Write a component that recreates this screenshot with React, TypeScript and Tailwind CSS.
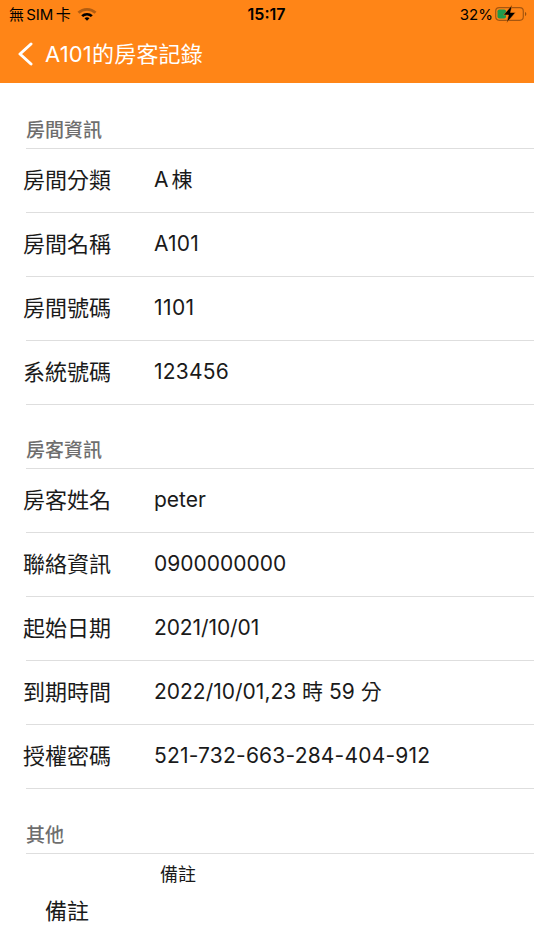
const FONT = "font-['Inter','Noto_Sans_CJK_TC',sans-serif]";

type Row = { label: string; value: string; valueClass?: string };

const sections: { title: string; rows: Row[] }[] = [
  {
    title: "房間資訊",
    rows: [
      { label: "房間分類", value: "A 棟", valueClass: "[word-spacing:-3px]" },
      { label: "房間名稱", value: "A101", valueClass: "tracking-[0.2px]" },
      { label: "房間號碼", value: "1101", valueClass: "tracking-[0.4px]" },
      { label: "系統號碼", value: "123456", valueClass: "tracking-[0.2px]" },
    ],
  },
  {
    title: "房客資訊",
    rows: [
      { label: "房客姓名", value: "peter" },
      { label: "聯絡資訊", value: "0900000000" },
      { label: "起始日期", value: "2021/10/01", valueClass: "-tracking-[0.1px]" },
      { label: "到期時間", value: "2022/10/01,23 時 59 分" },
      { label: "授權密碼", value: "521-732-663-284-404-912", valueClass: "tracking-[0.2px]" },
    ],
  },
];

function Wifi() {
  return (
    <svg width="20" height="14" viewBox="0 0 20 14" aria-hidden="true">
      <path d="M0.500 4.800a13.500 13.500 0 0 1 19 0l-2 2a10.700 10.700 0 0 0-15 0z" fill="#000" fillOpacity="0.3" />
      <path d="M4.200 8.300a8.400 8.400 0 0 1 11.600 0l-1.900 1.800a5.800 5.800 0 0 0-7.800 0z" fill="#000" />
      <path d="M7.500 11.300a3.700 3.700 0 0 1 5 0L10 13.800z" fill="#000" />
    </svg>
  );
}

function Battery() {
  return (
    <svg width="33" height="18" viewBox="0 0 33 18" aria-hidden="true">
      <rect x="0.700" y="2.700" width="27.600" height="12.600" rx="3.500" fill="none" stroke="#000" strokeOpacity="0.35" strokeWidth="1.200" />
      <rect x="2.500" y="4.500" width="8.500" height="9" rx="1.800" fill="#1f9a4b" />
      <path d="M30 7v4c.8-.3 1.300-1.100 1.300-2S30.800 7.300 30 7z" fill="#000" fillOpacity="0.4" />
      <path d="M17 0.300 8.500 10h5l-1.800 7.700L20.500 7.500h-5z" fill="#000" stroke="#ff8517" strokeWidth="0.500" />
    </svg>
  );
}

function Header() {
  return (
    <header className="bg-[#ff8517] h-[83px] flex flex-col shrink-0">
      <div className="h-7 flex items-center justify-between pl-[9px] pr-[6px] text-black">
        <div className="flex items-center gap-[6px] flex-1">
          <span className="text-[15px] leading-none [word-spacing:-2px]">無 SIM 卡</span>
          <Wifi />
        </div>
        <span className="text-[16px] font-semibold leading-none -ml-1">15:17</span>
        <div className="flex items-center justify-end gap-[2px] flex-1">
          <span className="text-[15px] leading-none">32%</span>
          <Battery />
        </div>
      </div>
      <div className="flex items-center h-[52px] pl-[17px] text-white">
        <svg width="16" height="24" viewBox="0 0 16 24" aria-hidden="true">
          <path d="M14 2 3 12l11 10" fill="none" stroke="#fff" strokeWidth="3" strokeLinecap="round" strokeLinejoin="round" />
        </svg>
        <span className="ml-[12px] text-[22px] leading-none tracking-[0.2px]">A101的房客記錄</span>
      </div>
    </header>
  );
}

function SectionTitle({ title }: { title: string }) {
  return (
    <div className="ml-[26px] h-[31px] border-b border-[#dedede]">
      <span className="block text-[19px] leading-[25px] font-medium text-[#6e6e6e]">{title}</span>
    </div>
  );
}

export default function App() {
  return (
    <div className={`w-[534px] h-[950px] overflow-hidden bg-white flex flex-col ${FONT}`}>
      <Header />
      <main className="pt-[35px] flex flex-col">
        {sections.map((section) => (
          <section key={section.title} className="mb-[33px]">
            <SectionTitle title={section.title} />
            {section.rows.map((row) => (
              <div key={row.label} className="ml-[26px] h-16 pb-[2px] flex items-center border-b border-[#dedede] text-[#1a1a1a]">
                <span className="-ml-[3px] w-[131px] shrink-0 text-[22px] leading-none">{row.label}</span>
                <span className={`text-[21px] leading-none ${row.valueClass ?? ""}`}>{row.value}</span>
              </div>
            ))}
          </section>
        ))}
        <section className="mt-px">
          <SectionTitle title="其他" />
          <div className="h-[97px]">
            <div className="pl-[160px] pt-[10px] text-[18px] leading-[22px] text-[#1a1a1a]">備註</div>
            <div className="pl-[45px] pt-[11px] text-[22px] leading-[28px] text-[#1a1a1a]">備註</div>
          </div>
        </section>
      </main>
    </div>
  );
}
